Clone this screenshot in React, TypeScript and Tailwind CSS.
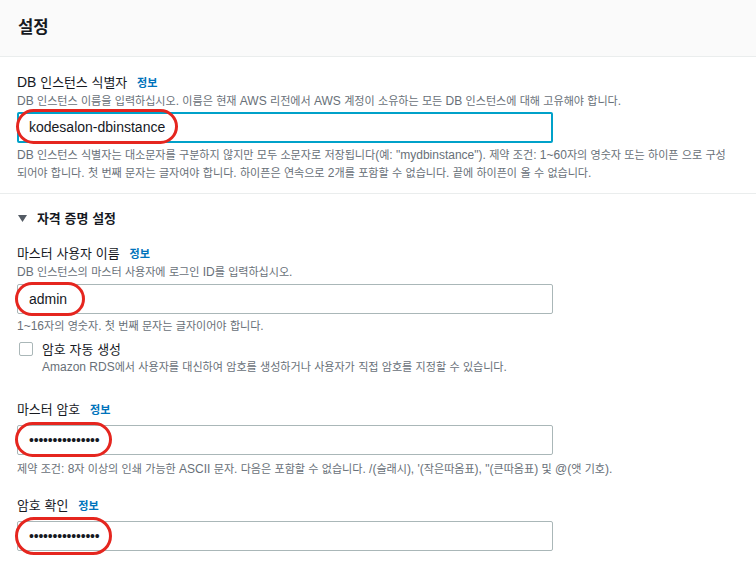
import React from "react";

const HANGUL = /([\u1100-\u11FF\u3130-\u318F\uAC00-\uD7AF]+)/;

function T({ s }: { s: string }) {
  const parts = s.split(HANGUL);
  return (
    <>
      {parts.map((p, i) =>
        i % 2 === 1 ? (
          <span
            key={i}
            className="font-['Noto_Sans_CJK_KR',sans-serif] text-[0.925em] leading-none tracking-[-0.005em]"
          >
            {p}
          </span>
        ) : (
          <React.Fragment key={i}>{p}</React.Fragment>
        )
      )}
    </>
  );
}

function Label({ text }: { text: string }) {
  return (
    <div className="flex items-baseline h-[20px] text-[14px] leading-[20px] text-[#16191f] whitespace-nowrap">
      <span>
        <T s={text} />
      </span>
      <span className="ml-[10px] text-[12px] font-bold text-[#0073bb]">
        <T s="정보" />
      </span>
    </div>
  );
}

function Small({ text, className = "" }: { text: string; className?: string }) {
  return (
    <div className={"h-[18px] text-[12px] leading-[18px] text-[#687078] whitespace-nowrap " + className}>
      <T s={text} />
    </div>
  );
}

function Ellipse({ className }: { className: string }) {
  return <div className={"absolute rounded-full border-[3px] border-[#e5261f] pointer-events-none " + className} />;
}

const DOTS = "•••••••••••••••";

export default function App() {
  return (
    <div className="w-[756px] min-h-[570px] bg-white font-['Liberation_Sans','Noto_Sans_CJK_KR',sans-serif] text-[#16191f] overflow-hidden">
      <div className="h-[57px] bg-[#fafafa] border-b border-[#eaeded] px-[18px] pb-[2px] flex items-center">
        <h2 className="text-[18px] font-bold leading-[24px] text-[#16191f]">
          <T s="설정" />
        </h2>
      </div>

      <section className="px-[17px] pt-[15px] pb-[11px] border-b border-[#eaeded]">
        <Label text="DB 인스턴스 식별자" />
        <Small text="DB 인스턴스 이름을 입력하십시오. 이름은 현재 AWS 리전에서 AWS 계정이 소유하는 모든 DB 인스턴스에 대해 고유해야 합니다." />
        <div className="relative mt-[2px] h-[31px] w-[536px] border-2 border-[#00a1c9] rounded-[2px] flex items-center pl-[10px] text-[14px]">
          kodesalon-dbinstance
          <Ellipse className="left-[-3px] top-[-5px] w-[162px] h-[35px]" />
        </div>
        <div className="mt-[3px] h-[36px] text-[12px] leading-[18px] text-[#687078] whitespace-nowrap">
          <T s={'DB 인스턴스 식별자는 대소문자를 구분하지 않지만 모두 소문자로 저장됩니다(예: "mydbinstance"). 제약 조건: 1~60자의 영숫자 또는 하이픈 으로 구성'} />
          <br />
          <T s="되어야 합니다. 첫 번째 문자는 글자여야 합니다. 하이픈은 연속으로 2개를 포함할 수 없습니다. 끝에 하이픈이 올 수 없습니다." />
        </div>
      </section>

      <section className="px-[17px] pt-[14px]">
        <div className="flex items-center h-[20px] text-[14px] leading-[20px] font-bold text-[#16191f]">
          <svg width="9" height="7" viewBox="0 0 9 7" className="ml-[1px] mr-[10px]">
            <polygon points="0,0 9,0 4.5,7" fill="#545b64" />
          </svg>
          <span>
            <T s="자격 증명 설정" />
          </span>
        </div>

        <div className="mt-[15px]">
          <Label text="마스터 사용자 이름" />
        </div>
        <Small text="DB 인스턴스의 마스터 사용자에 로그인 ID를 입력하십시오." />
        <div className="relative mt-[3px] h-[30px] w-[536px] border border-[#aab7b8] rounded-[2px] flex items-center pl-[11px] text-[14px]">
          admin
          <Ellipse className="left-[-3px] top-[-3px] w-[70px] h-[34px]" />
        </div>
        <Small className="mt-[3px]" text="1~16자의 영숫자. 첫 번째 문자는 글자이어야 합니다." />

        <div className="mt-[5px] flex items-center h-[18px]">
          <div className="ml-[2px] w-[14px] h-[14px] border border-[#aab7b8] rounded-[2px] bg-white" />
          <span className="ml-[9px] text-[14px] leading-[18px] text-[#16191f]">
            <T s="암호 자동 생성" />
          </span>
        </div>
        <Small className="pl-[25px]" text="Amazon RDS에서 사용자를 대신하여 암호를 생성하거나 사용자가 직접 암호를 지정할 수 있습니다." />

        <div className="mt-[23px]">
          <Label text="마스터 암호" />
        </div>
        <div className="relative mt-[6px] h-[30px] w-[536px] border border-[#aab7b8] rounded-[2px] flex items-center pl-[11px] text-[14px] tracking-[-0.2px]">
          {DOTS}
          <Ellipse className="left-[-3px] top-[-4px] w-[97px] h-[35px]" />
        </div>
        <Small
          className="mt-[5px]"
          text={"제약 조건: 8자 이상의 인쇄 가능한 ASCII 문자. 다음은 포함할 수 없습니다. /(슬래시), '(작은따옴표), \"(큰따옴표) 및 @(앳 기호)."}
        />

        <div className="mt-[17px]">
          <Label text="암호 확인" />
        </div>
        <div className="relative mt-[6px] h-[30px] w-[536px] border border-[#aab7b8] rounded-[2px] flex items-center pl-[11px] text-[14px] tracking-[-0.2px]">
          {DOTS}
          <Ellipse className="left-[-3px] top-[-5px] w-[97px] h-[38px]" />
        </div>
      </section>
    </div>
  );
}
